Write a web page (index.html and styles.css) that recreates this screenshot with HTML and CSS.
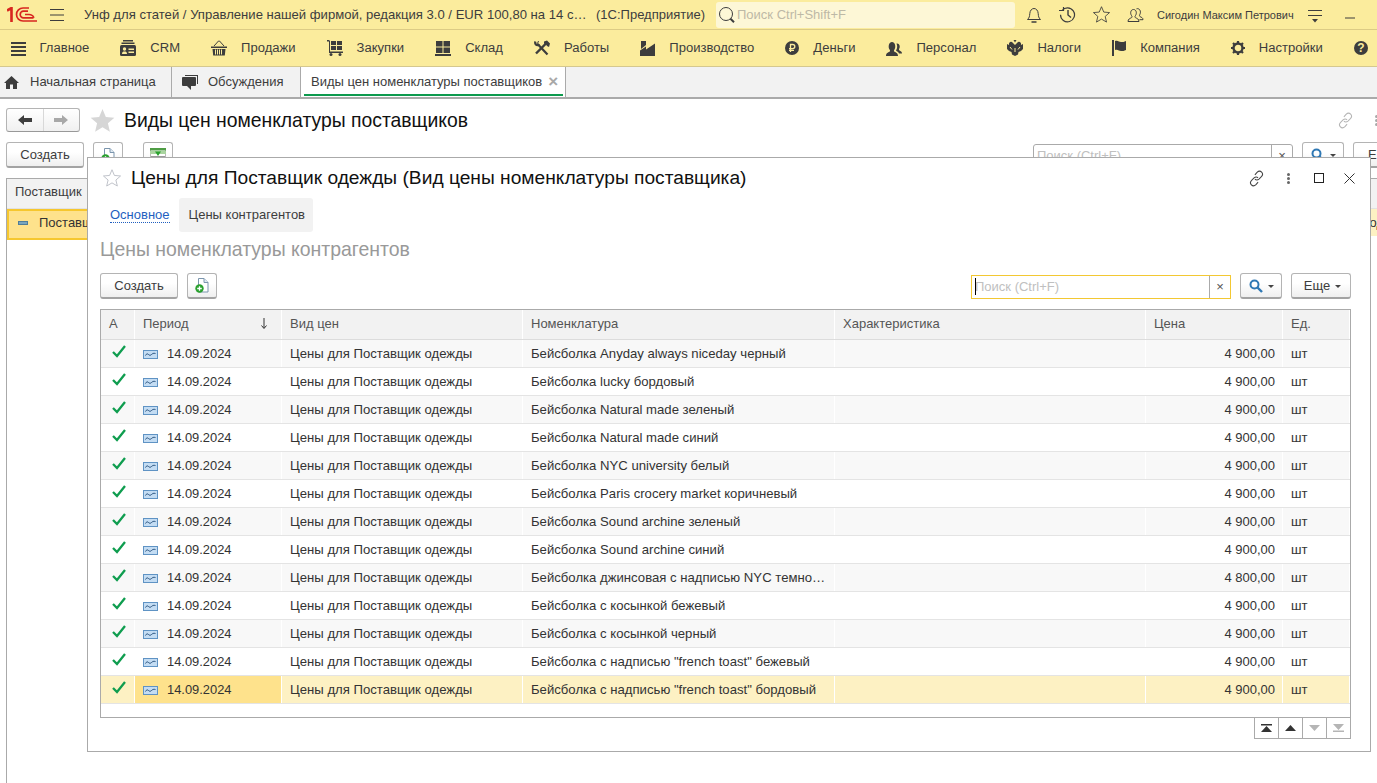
FILE: index.html
```html
<!DOCTYPE html>
<html lang="ru">
<head>
<meta charset="utf-8">
<title>Виды цен номенклатуры поставщиков</title>
<link rel="stylesheet" href="styles.css">
</head>
<body>
<svg class="defs" width="0" height="0">
  <symbol id="trend" viewBox="0 0 15 10"><rect x=".5" y="1.5" width="14" height="8" fill="#c3dcf3" stroke="#5f93c4"/><path d="M2.5 6.5c1-2 2-2 3-1s2 1 3 0 2-1.500 4-1" fill="none" stroke="#28527e"/></symbol>
  <symbol id="check" viewBox="0 0 14 13"><path d="M1 7l4 4 8-10" fill="none" stroke="#0f9d4f" stroke-width="2.300"/></symbol>
  <symbol id="docadd" viewBox="0 0 14 15"><path d="M3.500.5h5.500l4 4v9.500h-9.500z" fill="#fff" stroke="#7b95ad"/><path d="M9 .5v4h4" fill="#dfe9f2" stroke="#7b95ad"/><circle cx="4.500" cy="10.500" r="4.200" fill="#2aa12f"/><path d="M2.200 10.500h4.600M4.500 8.200v4.600" stroke="#fff" stroke-width="1.300"/></symbol>
  <symbol id="lens" viewBox="0 0 14 14"><circle cx="5.500" cy="5.500" r="4" fill="none" stroke="#2f78b4" stroke-width="2"/><path d="M8.500 8.500l4.500 4.500" stroke="#2f78b4" stroke-width="2.400"/></symbol>
  <symbol id="link" viewBox="0 0 16 16" fill="none" stroke="currentColor"><path d="M6.500 4.500l2-2.300c1.500-1.400 3.200-1.300 4.300-.2s1.200 2.800-.2 4.300l-2.300 2.200c-1.300 1.100-2.800 1-3.800.1"/><path d="M9.500 11.500l-2 2.300c-1.500 1.400-3.200 1.300-4.300.2s-1.200-2.800.2-4.300l2.300-2.200c1.300-1.100 2.800-1 3.800-.1"/></symbol>
  <symbol id="star" viewBox="0 0 24 24"><path d="M12 1l3.200 7.600 8.200.7-6.200 5.400 1.900 8L12 18.500 4.900 22.700l1.900-8L.6 9.300l8.200-.7z"/></symbol>
</svg>

<header class="topbar">
  <svg class="logo" width="30" height="15" viewBox="0 0 30 15"><g fill="none" stroke="#d8261f"><path d="M0 3.500L4.500 1v14" stroke-width="2.600"/><path d="M22 1H16a6.200 6.200 0 0 0 0 13h14" stroke-width="1.700"/><path d="M21 4.200h-4.500a3.200 3.200 0 0 0 0 6.600H26.500" stroke-width="1.700"/><path d="M18 7.500h4c2.500 0 4 1 5 3.300" stroke-width="1.500"/></g></svg>
  <svg class="burger" width="14" height="12" viewBox="0 0 14 12"><path d="M0 .5h14M0 6h14M0 11.500h14" stroke="#3d3d3d"/></svg>
  <div class="apptitle">Унф для статей / Управление нашей фирмой, редакция 3.0 / EUR 100,80 на 14 с…</div>
  <div class="appsub">(1С:Предприятие)</div>
  <div class="globalsearch">
    <svg width="18" height="18" viewBox="0 0 18 18" fill="none" stroke="#3d3d3d"><circle cx="8" cy="8" r="6.500"/><path d="M12.500 12.800l3.500 3.500" stroke-width="2"/></svg>
    <span>Поиск Ctrl+Shift+F</span>
  </div>
  <div class="topicons">
    <svg width="16" height="16" viewBox="0 0 16 16" fill="none" stroke="#3d3d3d"><path d="M1.500 12.500c2-2 2-3 2.300-6C4 3.500 5.800 1.500 8 1.500s4 2 4.200 5c.3 3 .3 4 2.300 6z"/><path d="M5.500 15h5" stroke-width="1.500"/></svg>
    <svg width="17" height="17" viewBox="0 0 17 17" fill="none" stroke="#3d3d3d"><path d="M3 4.500a7 7 0 1 1-1.500 4.300" stroke-width="1.200"/><path d="M0 4.500h4.500V1" stroke-width="1.200"/><path d="M9 4v5l3 2.500" stroke-width="1.400"/></svg>
    <svg class="outline" width="17" height="17"><use href="#star"/></svg>
    <svg width="17" height="16" viewBox="0 0 17 16" fill="none" stroke="#3d3d3d"><path d="M1 14.500c0-2.500 2-3 3.500-3.800.8-.6.600-1.500 0-2.200-1.500-2-1-6 2-6s3.500 4 2 6c-.6.700-.8 1.600 0 2.200 1.500.8 3.500 1.300 3.500 3.800z"/><path d="M9.500 1.800c3-1 5 2.700 3.300 5.700-.5 1-.3 1.800.4 2.200 1.300.7 2.800 1 2.800 3h-3.500"/></svg>
  </div>
  <div class="username">Сигодин Максим Петрович</div>
  <svg class="filterico" width="14" height="14" viewBox="0 0 14 14"><path d="M0 .5h14M0 5.500h14" stroke="#3d3d3d"/><path d="M4 9h6l-3 3.500z" fill="#3d3d3d"/></svg>
  <svg class="minimize" width="10" height="2" viewBox="0 0 10 2"><path d="M0 1h10" stroke="#3d3d3d"/></svg>
</header>

<nav class="menubar">
  <div class="menuitem"><svg width="15" height="15" viewBox="0 0 15 15" fill="#3d3d3d"><path d="M0 1h15v2H0zM0 5h15v2H0zM0 9h15v2H0zM0 13h15v2H0z"/></svg><span>Главное</span></div>
  <div class="menuitem"><svg width="16" height="16" viewBox="0 0 16 16" fill="#3d3d3d"><path d="M3 0h10v1.500H3zM1.500 2.500h13V4h-13z"/><rect y="5" width="16" height="11" rx="1.500"/><circle cx="4.500" cy="9" r="1.700" fill="#fbec9d"/><path d="M2 14c0-2 1-2.500 2.500-2.500S7 12 7 14zM8.500 8.500H14V10H8.500zM8.500 11.500H14V13H8.500z" fill="#fbec9d"/></svg><span>CRM</span></div>
  <div class="menuitem"><svg width="16" height="16" viewBox="0 0 16 16" fill="#3d3d3d"><path d="M0 6.500h16v1.500H0zM1.500 9H14.500l-.7 6.500H2.200z"/><path d="M3 6l4.500-5h1L13 6" fill="none" stroke="#3d3d3d"/><path d="M4.500 9.500v5M6.500 9.500v5M8.500 9.500v5M10.500 9.500v5" stroke="#fbec9d"/></svg><span>Продажи</span></div>
  <div class="menuitem"><svg width="16" height="16" viewBox="0 0 16 16" fill="#3d3d3d"><path d="M0 0h2l1 1v10.500h13V13H2V1.500H0z"/><path d="M4 1h5v4H4zM10 1h5v4h-5zM4 6h5v4H4zM10 6h5v4h-5z"/><circle cx="4" cy="14.500" r="1.500"/><circle cx="13" cy="14.500" r="1.500"/></svg><span>Закупки</span></div>
  <div class="menuitem"><svg width="16" height="16" viewBox="0 0 16 16" fill="#3d3d3d"><path d="M1 1h6.500v5.500H1zM8.500 1H15v5.500H8.500zM1 7.500h6.500V13H1zM8.500 7.500H15V13H8.500zM0 14h16v2H0z"/></svg><span>Склад</span></div>
  <div class="menuitem"><svg width="16" height="16" viewBox="0 0 16 16" fill="none" stroke="#3d3d3d"><path d="M1.500 1.500c-1 2 .5 4 3 3.500l9 9.500" stroke-width="2.200"/><path d="M4.500 1l-1 2.500 2 1" stroke-width="1"/><path d="M12.500 3L2 13.500" stroke-width="2.400"/><path d="M10 1.500l3-1 3 3-1 3.500-2-1-1-1.500-2-1z" fill="#3d3d3d" stroke="none"/></svg><span>Работы</span></div>
  <div class="menuitem"><svg width="15" height="15" viewBox="0 0 15 15" fill="#3d3d3d"><path d="M1 0h5v4L1 8zM0 15V9.500l6-4v3l9-6V15z"/></svg><span>Производство</span></div>
  <div class="menuitem"><svg width="14" height="14" viewBox="0 0 14 14"><circle cx="7" cy="7" r="7" fill="#3d3d3d"/><path d="M5.500 11V3.500h2.200a2 2 0 0 1 0 4.200H4M4 9.300h5" fill="none" stroke="#fbec9d" stroke-width="1.300"/></svg><span>Деньги</span></div>
  <div class="menuitem"><svg width="16" height="15" viewBox="0 0 16 15" fill="#3d3d3d"><path d="M0 15c0-3 2-3.500 3.500-4.300.8-.6.600-1.500 0-2.200C2 6.500 2.500 1 6 1s4 5.500 2.500 7.500c-.6.700-.8 1.600 0 2.200C10 11.500 12 12 12 15z"/><path d="M10.500 2.500c2.800-.8 4 3 2.800 5-.5.800-.4 1.500.2 2 1 .6 2.500 1 2.500 3h-3c-.5-1.500-2-2-3-3 1.500-2 1.500-5 .5-7z"/></svg><span>Персонал</span></div>
  <div class="menuitem"><svg width="16" height="16" viewBox="0 0 16 16" fill="#3d3d3d"><path d="M0 4l2 1V3.500a2 2 0 0 1 3-1.500L8 5l3-3a2 2 0 0 1 3 1.500V5l2-1v5l-2 2-2.500 1L11 14.500 8 16l-3-1.500L4.500 12 2 11 0 9z"/><path d="M6.500 0h3L8 2.500z"/><path d="M3 7l2 2.500M13 7l-2 2.500M8 8v4" stroke="#fbec9d"/></svg><span>Налоги</span></div>
  <div class="menuitem"><svg width="14" height="16" viewBox="0 0 14 16" fill="#3d3d3d"><path d="M0 0h2v16H0z"/><path d="M3 1c3-1 4 1 6 1s3 0 5-1v9c-2 1-3 1-5 1s-3-2-6-1z"/></svg><span>Компания</span></div>
  <div class="menuitem"><svg width="14" height="14" viewBox="0 0 14 14"><circle cx="7" cy="7" r="4.500" fill="none" stroke="#3d3d3d" stroke-width="2.400"/><path d="M7 0v3M7 11v3M0 7h3M11 7h3M2 2l2 2M10 10l2 2M12 2l-2 2M4 10l-2 2" stroke="#3d3d3d" stroke-width="2.200"/></svg><span>Настройки</span></div>
  <div class="menuitem help"><svg width="14" height="14" viewBox="0 0 14 14"><circle cx="7" cy="7" r="7" fill="#3d3d3d"/><text x="7" y="11" text-anchor="middle" class="helpq">?</text></svg></div>
</nav>

<div class="tabbar">
  <div class="tab tab-home"><svg width="15" height="13" viewBox="0 0 15 13" fill="#3d3d3d"><path d="M7.500 0L15 7h-2v6H9V8.500H6V13H2V7H0z"/></svg><span>Начальная страница</span></div>
  <div class="tab tab-talk"><svg width="16" height="15" viewBox="0 0 16 15" fill="#3d3d3d"><path d="M3 0h13v9h-1V1H3z"/><path d="M1 2h12a1 1 0 0 1 1 1v7a1 1 0 0 1-1 1H9v4l-4-4H1a1 1 0 0 1-1-1V3a1 1 0 0 1 1-1z"/></svg><span>Обсуждения</span></div>
  <div class="tab tab-active"><span>Виды цен номенклатуры поставщиков</span><span class="tabclose">×</span></div>
</div>

<main class="workspace">
  <div class="formhead">
    <div class="navbtns">
      <div class="navbtn"><svg width="14" height="10" viewBox="0 0 14 10"><path d="M0 5l6-5v3h8v4H6v3z" fill="#3d3d3d"/></svg></div>
      <div class="navbtn"><svg width="14" height="10" viewBox="0 0 14 10"><path d="M14 5L8 0v3H0v4h8v3z" fill="#a8a8a8"/></svg></div>
    </div>
    <svg class="bigstar" width="25" height="25"><use href="#star"/></svg>
    <h1 class="formtitle">Виды цен номенклатуры поставщиков</h1>
    <div class="headicons">
      <svg class="paleicon" width="17" height="17"><use href="#link"/></svg>
      <div class="dots pale"><i></i><i></i><i></i></div>
    </div>
  </div>
  <div class="toolbar bg-toolbar">
    <div class="btn btn-create">Создать</div>
    <div class="btn btn-icon bgicon"><svg width="14" height="15"><use href="#docadd"/></svg></div>
    <div class="btn btn-icon btn-list bgicon"><svg width="16" height="14" viewBox="0 0 16 14"><rect x=".5" y=".5" width="15" height="13" fill="#fff" stroke="#b8b8b8"/><path d="M0 0h16v2.500H0z" fill="#4f9d45"/><path d="M0 3h16v3H0z" fill="#a9d49f"/><path d="M1 8.500h14" stroke="#9a9a9a"/><path d="M5 3.500h6L8 8z" fill="#2aa12f"/></svg></div>
    <div class="searchgroup">
      <div class="search bg-search"><span>Поиск (Ctrl+F)</span><b>×</b></div>
      <div class="btn btn-find"><svg width="14" height="14"><use href="#lens"/></svg><i class="caret"></i></div>
      <div class="btn btn-more-bg">Е</div>
    </div>
  </div>
  <div class="bgtable">
    <div class="bghead"><span>Поставщик</span></div>
    <div class="bgrow"><i class="dash"></i><span class="bgname">Поставщик одежды</span><span class="bgtail">од</span></div>
  </div>

  <section class="modal">
    <div class="modalhead">
      <svg class="smallstar" width="18" height="18"><use href="#star"/></svg>
      <h2 class="modaltitle">Цены для Поставщик одежды (Вид цены номенклатуры поставщика)</h2>
      <div class="modalicons">
        <svg class="darkicon" width="17" height="17"><use href="#link"/></svg>
        <div class="dots"><i></i><i></i><i></i></div>
        <i class="maxbox"></i>
        <svg class="closeico" width="11" height="11" viewBox="0 0 11 11"><path d="M.5.500l10 10M10.500.500l-10 10" stroke="#333"/></svg>
      </div>
    </div>
    <div class="pagetabs">
      <a class="pagelink">Основное</a>
      <div class="pagetab">Цены контрагентов</div>
    </div>
    <h3 class="section">Цены номенклатуры контрагентов</h3>
    <div class="toolbar mtoolbar">
      <div class="btn btn-create">Создать</div>
      <div class="btn btn-icon"><svg width="14" height="15"><use href="#docadd"/></svg></div>
      <div class="searchgroup">
        <div class="search focus"><i class="cursor"></i><span>Поиск (Ctrl+F)</span><b>×</b></div>
        <div class="btn btn-find"><svg width="14" height="14"><use href="#lens"/></svg><i class="caret"></i></div>
        <div class="btn btn-more">Еще<i class="caret"></i></div>
      </div>
    </div>
    <div class="grid">
      <div class="row headrow">
        <div>А</div><div class="sortcell"><span>Период</span><svg width="8" height="11" viewBox="0 0 8 11"><path d="M4 0v10M1.500 7.500L4 10.500l2.500-3" fill="none" stroke="#333"/></svg></div><div>Вид цен</div><div>Номенклатура</div><div>Характеристика</div><div>Цена</div><div>Ед.</div>
      </div>
      <div class="row"><div class="ok"><svg width="14" height="13"><use href="#check"/></svg></div><div class="date"><svg width="15" height="10"><use href="#trend"/></svg>14.09.2024</div><div>Цены для Поставщик одежды</div><div>Бейсболка Anyday always niceday черный</div><div></div><div class="price">4 900,00</div><div>шт</div></div>
      <div class="row"><div class="ok"><svg width="14" height="13"><use href="#check"/></svg></div><div class="date"><svg width="15" height="10"><use href="#trend"/></svg>14.09.2024</div><div>Цены для Поставщик одежды</div><div>Бейсболка lucky бордовый</div><div></div><div class="price">4 900,00</div><div>шт</div></div>
      <div class="row"><div class="ok"><svg width="14" height="13"><use href="#check"/></svg></div><div class="date"><svg width="15" height="10"><use href="#trend"/></svg>14.09.2024</div><div>Цены для Поставщик одежды</div><div>Бейсболка Natural made зеленый</div><div></div><div class="price">4 900,00</div><div>шт</div></div>
      <div class="row"><div class="ok"><svg width="14" height="13"><use href="#check"/></svg></div><div class="date"><svg width="15" height="10"><use href="#trend"/></svg>14.09.2024</div><div>Цены для Поставщик одежды</div><div>Бейсболка Natural made синий</div><div></div><div class="price">4 900,00</div><div>шт</div></div>
      <div class="row"><div class="ok"><svg width="14" height="13"><use href="#check"/></svg></div><div class="date"><svg width="15" height="10"><use href="#trend"/></svg>14.09.2024</div><div>Цены для Поставщик одежды</div><div>Бейсболка NYC university белый</div><div></div><div class="price">4 900,00</div><div>шт</div></div>
      <div class="row"><div class="ok"><svg width="14" height="13"><use href="#check"/></svg></div><div class="date"><svg width="15" height="10"><use href="#trend"/></svg>14.09.2024</div><div>Цены для Поставщик одежды</div><div>Бейсболка Paris crocery market коричневый</div><div></div><div class="price">4 900,00</div><div>шт</div></div>
      <div class="row"><div class="ok"><svg width="14" height="13"><use href="#check"/></svg></div><div class="date"><svg width="15" height="10"><use href="#trend"/></svg>14.09.2024</div><div>Цены для Поставщик одежды</div><div>Бейсболка Sound archine зеленый</div><div></div><div class="price">4 900,00</div><div>шт</div></div>
      <div class="row"><div class="ok"><svg width="14" height="13"><use href="#check"/></svg></div><div class="date"><svg width="15" height="10"><use href="#trend"/></svg>14.09.2024</div><div>Цены для Поставщик одежды</div><div>Бейсболка Sound archine синий</div><div></div><div class="price">4 900,00</div><div>шт</div></div>
      <div class="row"><div class="ok"><svg width="14" height="13"><use href="#check"/></svg></div><div class="date"><svg width="15" height="10"><use href="#trend"/></svg>14.09.2024</div><div>Цены для Поставщик одежды</div><div class="clip">Бейсболка джинсовая с надписью NYC темно…</div><div></div><div class="price">4 800,00</div><div>шт</div></div>
      <div class="row"><div class="ok"><svg width="14" height="13"><use href="#check"/></svg></div><div class="date"><svg width="15" height="10"><use href="#trend"/></svg>14.09.2024</div><div>Цены для Поставщик одежды</div><div>Бейсболка с косынкой бежевый</div><div></div><div class="price">4 900,00</div><div>шт</div></div>
      <div class="row"><div class="ok"><svg width="14" height="13"><use href="#check"/></svg></div><div class="date"><svg width="15" height="10"><use href="#trend"/></svg>14.09.2024</div><div>Цены для Поставщик одежды</div><div>Бейсболка с косынкой черный</div><div></div><div class="price">4 900,00</div><div>шт</div></div>
      <div class="row"><div class="ok"><svg width="14" height="13"><use href="#check"/></svg></div><div class="date"><svg width="15" height="10"><use href="#trend"/></svg>14.09.2024</div><div>Цены для Поставщик одежды</div><div>Бейсболка с надписью "french toast" бежевый</div><div></div><div class="price">4 900,00</div><div>шт</div></div>
      <div class="row selected"><div class="ok"><svg width="14" height="13"><use href="#check"/></svg></div><div class="date"><svg width="15" height="10"><use href="#trend"/></svg>14.09.2024</div><div>Цены для Поставщик одежды</div><div>Бейсболка с надписью "french toast" бордовый</div><div></div><div class="price">4 900,00</div><div>шт</div></div>
    </div>
    <div class="pager">
      <div><svg width="11" height="8" viewBox="0 0 11 8"><path d="M0 0h11v1.500H0zM5.500 2L11 8H0z" fill="#333"/></svg></div>
      <div><svg width="11" height="6" viewBox="0 0 11 6"><path d="M5.500 0L11 6H0z" fill="#333"/></svg></div>
      <div><svg width="11" height="6" viewBox="0 0 11 6"><path d="M5.500 6L11 0H0z" fill="#b5b5b5"/></svg></div>
      <div><svg width="11" height="8" viewBox="0 0 11 8"><path d="M0 6.500h11V8H0zM5.500 6L11 0H0z" fill="#b5b5b5"/></svg></div>
    </div>
  </section>
</main>
</body>
</html>
```
FILE: styles.css
```css
* { box-sizing: border-box; }
html, body { margin: 0; height: 100%; }
body {
  width: 1377px;
  height: 783px;
  overflow: hidden;
  background: #fff;
  color: #333;
  font: 13px/16px "Liberation Sans", Arial, sans-serif;
  display: flex;
  flex-direction: column;
}
.defs { position: absolute; }
svg { display: block; flex: none; }
h1, h2, h3 { margin: 0; font-weight: 400; }

/* top bar */
.topbar {
  height: 30px;
  flex: none;
  display: flex;
  align-items: center;
  background: #fbec9d;
  border-bottom: 1px solid #dccb85;
  color: #3d3d3d;
  padding-left: 7px;
}
.logo { margin-right: 13px; }
.burger { margin-right: 20px; }
.apptitle { width: 512px; white-space: nowrap; overflow: hidden; font-size: 13.1px; }
.appsub { width: 120px; white-space: nowrap; }
.globalsearch {
  width: 299px;
  height: 26px;
  display: flex;
  align-items: center;
  gap: 1px;
  padding-left: 2px;
  background: #fdf7d6;
  border-radius: 3px;
  color: #bdb9a6;
}
.topicons { display: flex; align-items: center; gap: 17px; margin-left: 11px; width: 131px; }
.outline { fill: none; stroke: #3d3d3d; stroke-width: 1.200; overflow: visible; }
.username { width: 151px; font-size: 11px; white-space: nowrap; }
.filterico { margin-right: 23px; margin-top: 4px; }
.minimize { margin-top: 6px; }

/* menu */
.menubar {
  height: 37px;
  flex: none;
  display: flex;
  align-items: center;
  gap: 31px;
  padding-left: 10.5px;
  background: #fbec9d;
  border-bottom: 1px solid #d5c88f;
  color: #3d3d3d;
  font-size: 13.05px;
}
.menuitem { display: flex; align-items: center; gap: 14px; white-space: nowrap; }

.helpq { font: 700 12px "Liberation Sans", Arial, sans-serif; fill: #fbec9d; }

/* tabs */
.tabbar {
  height: 32px;
  flex: none;
  display: flex;
  background: #f2f2f2;
  border-bottom: 2px solid #aaa;
  color: #3d3d3d;
}
.tab { display: flex; align-items: center; height: 30px; border-right: 1px solid #aaa; white-space: nowrap; }
.tab-home { width: 172px; padding-left: 4px; gap: 11px; }
.tab-talk { width: 129px; padding-left: 10px; gap: 10px; }
.tab-active {
  width: 265px;
  padding-left: 10px;
  background: #fff;
  position: relative;
}
.tab-active::after {
  content: "";
  position: absolute;
  left: 3px;
  right: 2px;
  bottom: 1px;
  height: 2px;
  background: #0d9a4e;
}
.tabclose { margin-left: 6px; color: #a8a8a8; font-size: 17px; font-weight: 700; line-height: 16px; }

/* background form */
.workspace { position: relative; flex: 1; min-height: 0; }
.formhead { display: flex; align-items: center; height: 24px; margin: 9px 0 0 6px; }
.navbtns {
  display: flex;
  width: 74px;
  height: 24px;
  border: 1px solid #b4b4b4;
  border-bottom-color: #999;
  border-radius: 3px;
  background: linear-gradient(#fff, #f0f0f0);
}
.navbtn { flex: 1; display: flex; align-items: center; justify-content: center; }
.navbtn + .navbtn { border-left: 1px solid #d8d8d8; }
.bigstar { margin-left: 10px; fill: #d6d6d6; }
.formtitle { margin-left: 9px; font-size: 19.35px; line-height: 22px; color: #111; }
.headicons { margin-left: auto; display: flex; align-items: center; gap: 21px; margin-right: -1px; }
.paleicon { color: #b5b5b5; }
.dots { display: flex; flex-direction: column; gap: 1px; width: 3px; }
.dots i { width: 3px; height: 3px; border-radius: 50%; background: #666; }
.dots.pale i { background: #aaa; }

.toolbar { display: flex; align-items: flex-start; }
.bg-toolbar { margin: 10px 0 0 6px; height: 26px; }
.btn {
  height: 26px;
  display: flex;
  align-items: center;
  justify-content: center;
  border: 1px solid #b4b4b4;
  border-bottom: 2px solid #a3a3a3;
  border-radius: 3px;
  background: linear-gradient(#fff 40%, #efefef);
  color: #3d3d3d;
  white-space: nowrap;
}
.btn-create { width: 78px; }
.btn-icon { width: 30px; margin-left: 9px; }
.btn-list { margin-left: 20px; }
.bgicon { align-items: flex-start; padding-top: 5px; }
.searchgroup { margin-left: auto; display: flex; }
.bg-toolbar .searchgroup { margin-right: -26px; }
.search {
  width: 260px;
  height: 24px;
  margin-top: 2px;
  display: flex;
  align-items: center;
  padding-left: 3px;
  border: 1px solid #aaa;
  border-radius: 3px 3px 0 0;
  color: #c0c0c0;
  position: relative;
}
.search span { flex: 1; }
.search b {
  width: 21px;
  height: 100%;
  display: flex;
  align-items: center;
  justify-content: center;
  border-left: 1px solid #aaa;
  color: #555;
  font-weight: 400;
}
.search.focus { border-color: #f3c833; border-radius: 0; }
.cursor { position: absolute; left: 3px; top: 2px; width: 1px; height: 17px; background: #000; }
.btn-find { width: 42px; margin-left: 9px; gap: 5px; }
.btn-more { width: 60px; margin-left: 9px; gap: 5px; padding-left: 3px; }
.btn-more-bg { width: 50px; margin-left: 9px; justify-content: flex-start; padding-left: 14px; }
.caret { width: 0; height: 0; border: 3.500px solid transparent; border-top: 3.500px solid #444; border-bottom: 0; margin-top: 2px; }

.bgtable { margin: 10px 0 0 6px; height: 606px; border: 1px solid #aaa; border-right: 0; border-bottom: 0; }
.bghead { height: 30px; background: #f2f2f2; padding: 5px 0 0 8px; line-height: 16px; color: #3d3d3d; border-bottom: 1px solid #e2e2e2; }
.bgrow {
  height: 27px;
  display: flex;
  align-items: center;
  background: #fdf1c3;
  position: relative;
  white-space: nowrap;
}
.bgrow::before {
  content: "";
  position: absolute;
  left: 0;
  top: 0;
  width: 600px;
  height: 27px;
  background: #fee28c;
  border: 2px solid #f6c72f;
}
.dash { position: relative; width: 10px; height: 4px; margin-left: 11px; background: #7aa5bd; border: 1px solid #4f7d99; }
.bgrow span { position: relative; margin-left: 11px; }
.bgname { width: 48px; overflow: hidden; }
.bgrow .bgtail { margin-left: auto; margin-right: -7px; }

/* modal */
.modal {
  position: absolute;
  left: 87px;
  top: 58px;
  width: 1284px;
  height: 595px;
  background: #fff;
  border: 1px solid #aaa;
  padding: 0 19px 0 12px;
  display: flex;
  flex-direction: column;
}
.modalhead { display: flex; align-items: center; height: 40px; flex: none; }
.smallstar { margin-left: 3px; fill: #fff; stroke: #b9bcc4; stroke-width: 1.200; overflow: visible; }
.modaltitle { margin-left: 10px; font-size: 19.2px; line-height: 24px; color: #111; }
.modalicons { margin-left: auto; margin-right: -4px; display: flex; align-items: center; color: #444; }
.modalicons .dots { margin-left: 22px; }
.maxbox { width: 10px; height: 10px; border: 1.500px solid #222; margin-left: 24px; }
.closeico { margin-left: 20px; }

.pagetabs { display: flex; align-items: center; height: 34px; flex: none; }
.pagelink {
  margin-left: 10px;
  color: #1f5fbf;
  border-bottom: 1px dotted #1f5fbf;
  line-height: 14px;
}
.pagetab {
  margin-left: 9px;
  width: 134px;
  height: 34px;
  display: flex;
  align-items: center;
  padding-left: 10px;
  background: #f2f2f2;
  border-radius: 3px;
  color: #3d3d3d;
}
.section { height: 24px; margin-top: 6px; font-size: 19.45px; line-height: 22px; color: #999; }
.mtoolbar { height: 26px; margin-top: 11px; flex: none; }

.grid {
  margin-top: 10px;
  height: 409px;
  flex: none;
  border: 1px solid #aaa;
  background: #fff;
  font-size: 13.15px;
}
.row {
  display: grid;
  grid-template-columns: 34px 147px 241px 312px 311px 137px 67px;
  height: 28px;
  line-height: 27px;
  border-bottom: 1px solid #e4e4e4;
  background: #fff;
  color: #333;
}
.row > div { padding-left: 8px; white-space: nowrap; overflow: hidden; border-right: 1px solid #fff; }
.row:nth-child(even) { background: #f8f8f8; }
.headrow { height: 30px; line-height: 28px; background: #f2f2f2 !important; color: #555; border-bottom: 1px solid #dcdcdc; font-size: 13px; }
.sortcell { display: flex; justify-content: space-between; padding-right: 13px; }
.sortcell svg { margin-top: 8px; }
.ok { display: flex; padding-top: 5px; padding-left: 11px !important; }
.date { display: flex; align-items: center; gap: 9px; font-size: 12.9px; }
.price { text-align: right; padding-right: 7px; font-size: 13px; }
.selected { background: #fdf1c3 !important; }
.selected .date { background: #fee28c; }

.pager {
  display: flex;
  align-self: flex-end;
  height: 22px;
  width: 97px;
  margin-top: -1px;
  border: 1px solid #aaa;
  flex: none;
}
.pager div { flex: 1; display: flex; align-items: center; justify-content: center; }
.pager div + div { border-left: 1px solid #aaa; }
```
